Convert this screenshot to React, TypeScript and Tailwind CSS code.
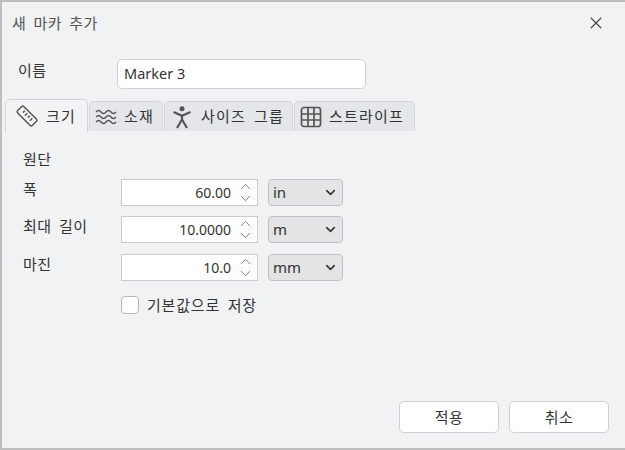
import { ChevronDown, ChevronUp, X } from "lucide-react";
import type { ReactNode } from "react";

const fontStack = "font-['Noto_Sans','Noto_Sans_CJK_KR',sans-serif]";

function RulerIcon() {
  return (
    <svg width="24" height="24" viewBox="0 0 24 24" fill="none" stroke="#555" strokeWidth="1.5">
      <rect x="-10.500" y="-4.500" width="21" height="9" rx="1.800" transform="translate(12 12) rotate(45)" />
      <path d="M9.800 6.800l-1.800 1.800M12.300 9.300L9.900 11.700M14.800 11.800l-1.800 1.800M17.300 14.300l-2.400 2.400" />
    </svg>
  );
}

function WavesIcon() {
  return (
    <svg width="22" height="22" viewBox="0 0 22 22" fill="none" stroke="#555" strokeWidth="1.4">
      <path d="M1 6c2-2 3.500-2 5 0s3.500 2 5 0 3.500-2 5 0 3.500 2 5 0" />
      <path d="M1 11c2-2 3.500-2 5 0s3.500 2 5 0 3.500-2 5 0 3.500 2 5 0" />
      <path d="M1 16c2-2 3.500-2 5 0s3.500 2 5 0 3.500-2 5 0 3.500 2 5 0" />
    </svg>
  );
}

function PersonIcon() {
  return (
    <svg width="24" height="24" viewBox="0 0 24 24" fill="none" stroke="#555" strokeWidth="2.200">
      <circle cx="12" cy="3.800" r="2.500" fill="#555" stroke="none" />
      <path d="M3.500 7l8.500 3.800L20.500 7M12 10.800v3.700M12 14.500L7 23M12 14.500l5 8.500" />
    </svg>
  );
}

function GridIcon() {
  return (
    <svg width="22" height="22" viewBox="0 0 22 22" fill="none" stroke="#555" strokeWidth="1.7">
      <rect x="1.500" y="1.500" width="19" height="19" rx="2.500" />
      <path d="M8 2v18M14 2v18M2 8h18M2 14h18" />
    </svg>
  );
}

function Tab({ icon, label, width, active }: { icon: ReactNode; label: string; width: string; active?: boolean }) {
  return (
    <div
      className={
        active
          ? `flex items-center gap-[7px] h-[33px] pl-[9px] -mb-px bg-[#f2f3f5] border border-b-0 border-[#d3d5d8] rounded-t-[5px] z-10 ${width}`
          : `flex items-center gap-[7px] h-[30px] pl-[5px] bg-[#e4e6e9] border border-b-0 border-[#d3d5d8] rounded-t-[5px] ${width}`
      }
    >
      {icon}
      <span className="text-[15px] tracking-[1.2px] text-[#333] whitespace-nowrap">{label}</span>
    </div>
  );
}

function NumberRow({ label, value, unit, rowClass }: { label: string; value: string; unit: string; rowClass: string }) {
  return (
    <div className={`flex items-start ${rowClass}`}>
      <span className="w-[119px] pl-[21px] text-[15px] leading-[20px] tracking-[0.5px] text-[#333]">{label}</span>
      <div className="flex items-center justify-end w-[137px] h-[27px] bg-white border border-[#c8cacd] pr-[3px]">
        <span className="text-[14px] text-[#333]">{value}</span>
        <div className="flex flex-col items-center ml-[6px] w-[17px]">
          <ChevronUp size={17} strokeWidth={1.2} className="text-[#666] -mb-[5px]" />
          <ChevronDown size={17} strokeWidth={1.2} className="text-[#666]" />
        </div>
      </div>
      <div className="flex items-center justify-between w-[75px] h-[27px] ml-[10px] pl-[4px] pr-[4px] bg-[#e3e4e6] border border-[#c0c2c5] rounded-[4px]">
        <span className="text-[15px] text-[#333]">{unit}</span>
        <ChevronDown size={15} strokeWidth={2.5} className="text-[#333]" />
      </div>
    </div>
  );
}

export default function App() {
  return (
    <div className={`${fontStack} [word-spacing:3px] relative w-[625px] h-[450px] flex flex-col bg-[#f1f2f4] border-t-2 border-l-2 border-b-2 border-[#bdbdbd] overflow-hidden`}>
      {/* Title bar */}
      <div className="flex items-center justify-between h-[42px] pl-[10px] pr-[19px]">
        <span className="text-[15px] tracking-[0.4px] text-[#555]">새 마카 추가</span>
        <X size={20} strokeWidth={1.3} className="text-[#444]" />
      </div>

      {/* Name */}
      <div className="flex items-center mt-[15px]">
        <span className="w-[115px] pl-[16px] text-[15px] tracking-[0.5px] text-[#333] -mt-[7px]">이름</span>
        <div className="flex items-center w-[249px] h-[30px] px-[6px] bg-white border border-[#cfd1d4] rounded-[5px] text-[14.500px] [word-spacing:0px] text-[#333]">
          Marker 3
        </div>
      </div>

      {/* Tabs */}
      <div className="flex items-end mt-[10px] pl-[3px] gap-[1px] h-[32px]">
        <Tab active width="w-[83px]" icon={<RulerIcon />} label="크기" />
        <Tab width="w-[74px]" icon={<WavesIcon />} label="소재" />
        <Tab width="w-[129px]" icon={<PersonIcon />} label="사이즈 그룹" />
        <Tab width="w-[121px]" icon={<GridIcon />} label="스트라이프" />
      </div>

      {/* Fabric */}
      <div className="flex flex-col flex-1">
        <div className="pl-[21px] mt-[18px] text-[15px] leading-[20px] tracking-[0.5px] text-[#333]">원단</div>
        <NumberRow label="폭" value="60.00" unit="in" rowClass="mt-[10px]" />
        <NumberRow label="최대 길이" value="10.0000" unit="m" rowClass="mt-[10px]" />
        <NumberRow label="마진" value="10.0" unit="mm" rowClass="mt-[11px]" />
        <div className="flex items-center gap-[8px] ml-[119px] mt-[13px]">
          <div className="w-[18px] h-[18px] bg-white border border-[#b5b7ba] rounded-[4px]" />
          <span className="text-[15px] tracking-[0.8px] text-[#333]">기본값으로 저장</span>
        </div>

        {/* Actions */}
        <div className="flex justify-end gap-[10px] mt-auto mb-[15px] pr-[16px]">
          <button className="w-[100px] h-[32px] bg-white border border-[#cfd1d4] rounded-[5px] text-[15px] tracking-[0.5px] text-[#333]">적용</button>
          <button className="w-[100px] h-[32px] bg-white border border-[#cfd1d4] rounded-[5px] text-[15px] tracking-[0.5px] text-[#333]">취소</button>
        </div>
      </div>
    </div>
  );
}
